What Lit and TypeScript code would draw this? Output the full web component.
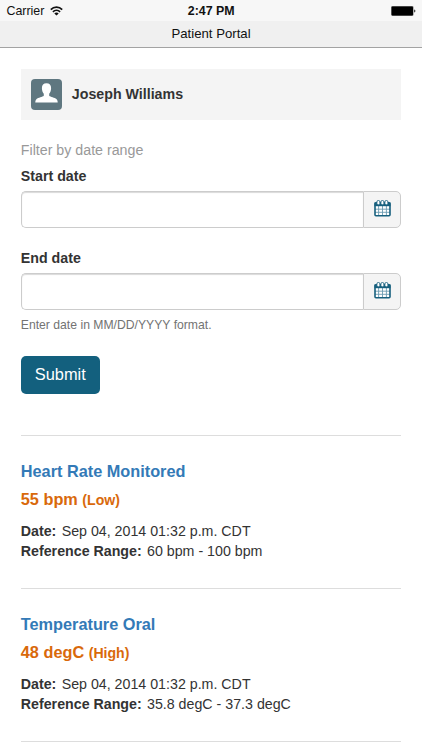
import { LitElement, html, svg, css } from "lit";
import { customElement, property } from "lit/decorators.js";

const font = css`"Liberation Sans", Arial, Helvetica, sans-serif`;

@customElement("status-bar")
class StatusBar extends LitElement {
  static styles = css`
    :host {
      display: grid;
      grid-template-columns: 1fr auto 1fr;
      align-items: center;
      height: 20.5px;
      padding: 1px 6px 0 6.5px;
      box-sizing: border-box;
      background: #f7f7f7;
      font: 12.4px/20px ${font};
      color: #111;
    }
    .carrier { display: flex; align-items: center; gap: 5.5px; }
    .time { font-weight: bold; }
    .battery { justify-self: end; display: block; }
    svg { display: block; }
    .wifi { margin-top: -1px; }
  `;
  render() {
    return html`
      <span class="carrier">
        Carrier
        <svg class="wifi" width="13" height="10" viewBox="0 0 13 10" fill="none" stroke="#111" stroke-width="1.7">
          <path d="M.8 3.6C4 .3 9 .3 12.2 3.6" />
          <path d="M2.9 5.8c2.1-2 5.1-2 7.2 0" />
          <path d="M6.5 9.5L4.3 7.4c1.2-1.1 3.200-1.100 4.400 0z" fill="#111" stroke="none" />
        </svg>
      </span>
      <span class="time">2:47 PM</span>
      <svg class="battery" width="25" height="10" viewBox="0 0 25 10">
        <rect x="0" y="0" width="22.6" height="10" rx="1.4" fill="#888" />
        <rect x=".6" y=".6" width="21.4" height="8.8" rx="1" fill="#000" />
        <path d="M23.2 3.4c1.6.3 1.6 2.9 0 3.2z" fill="#222" />
      </svg>
    `;
  }
}

@customElement("date-field")
class DateField extends LitElement {
  @property() label = "";
  static styles = css`
    :host { display: block; font: 14.23px/20.4px ${font}; color: #333; }
    .label { display: block; font-weight: bold; height: 25px; }
    .group { display: flex; height: 37px; }
    .input {
      flex: 1;
      min-width: 0;
      box-sizing: border-box;
      margin: 0;
      padding: 0 12px;
      font: inherit;
      border: 1px solid #ccc;
      border-right: 0;
      border-radius: 5px 0 0 5px;
      background: #fff;
      box-shadow: inset 0 1px 1px rgba(0, 0, 0, 0.15);
    }
    .addon {
      width: 38px;
      box-sizing: border-box;
      padding: 0;
      border: 1px solid #ccc;
      border-radius: 0 5px 5px 0;
      background: #f4f4f4;
      display: grid;
      place-items: center;
    }
    svg { display: block; margin: -2px 0 0 0; }
  `;
  render() {
    return html`
      <label class="label">${this.label}</label>
      <div class="group">
        <input class="input" type="text" />
        <button class="addon">
          <svg width="17" height="17" viewBox="0 0 17 17">
            <rect x=".8" y="2.500" width="15.4" height="13.7" rx="1" fill="#fff" />
            <path d="M4.6 6v9.6M8.5 6v9.6M12.4 6v9.6M1 9.2h15M1 12.3h15" stroke="#6b9bb1" stroke-width=".9" />
            <rect x="1" y="2.8" width="15" height="13" rx="1" fill="none" stroke="#17607e" stroke-width="1.6" />
            <path d="M.5 2.500h16v3.700H.5z" fill="#17607e" />
            ${[2.9, 6.9, 10.9].map(
              (x) => svg`<rect x=${x} y=".5" width="3" height="4.3" rx="1.400" fill="#fff" stroke="#17607e" stroke-width=".9" />`
            )}
          </svg>
        </button>
      </div>
    `;
  }
}

@customElement("result-item")
class ResultItem extends LitElement {
  @property() name = "";
  @property() value = "";
  @property() flag = "";
  @property() date = "";
  @property() range = "";
  static styles = css`
    :host {
      display: block;
      box-sizing: border-box;
      height: 153px;
      border-top: 1px solid #ddd;
      padding-top: 25px;
      font: 14.23px/20.4px ${font};
      color: #333;
    }
    .name, .value { margin: 0; font-size: 16.3px; line-height: 20px; font-weight: bold; }
    .name { color: #337ab7; }
    .value { color: #d9690b; margin-top: 8.4px; }
    .flag { font-size: 14.1px; }
    .details { margin: 10.6px 0 0; }
    .row { display: flex; gap: 5.3px; }
    .term { font-weight: bold; }
    .desc { margin: 0; }
  `;
  render() {
    return html`
      <h2 class="name">${this.name}</h2>
      <p class="value">${this.value} <span class="flag">(${this.flag})</span></p>
      <dl class="details">
        <div class="row"><dt class="term">Date:</dt><dd class="desc">${this.date}</dd></div>
        <div class="row"><dt class="term">Reference Range:</dt><dd class="desc">${this.range}</dd></div>
      </dl>
    `;
  }
}

@customElement("app-root")
class AppRoot extends LitElement {
  static styles = css`
    :host {
      display: block;
      height: 750px;
      overflow: hidden;
      background: #fff;
      font: 14.23px/20.4px ${font};
      color: #333;
    }
    .title {
      box-sizing: border-box;
      height: 27.5px;
      margin: 0;
      background: #f0f0f0;
      border-bottom: 1px solid #a3a3a3;
      font-size: 13.2px;
      font-weight: normal;
      line-height: 26px;
      text-align: center;
      color: #111;
    }
    .content { padding: 20.5px 20.8px 0; }
    .patient {
      display: flex;
      align-items: center;
      gap: 10px;
      height: 51px;
      padding-left: 10px;
      background: #f4f4f4;
      font-weight: bold;
    }
    .avatar { display: block; }
    .legend { color: #999; margin: 20.5px 0 5.1px; }
    .end { margin-top: 20.5px; }
    .hint { margin: 5px 0 0; font-size: 12.2px; color: #737373; }
    .submit {
      display: block;
      box-sizing: border-box;
      width: 79px;
      height: 38px;
      margin: 20.4px 0 41.2px;
      padding: 0 0 2px;
      border: 0;
      border-radius: 5px;
      background: #13607e;
      color: #fff;
      font: 16.4px/36px ${font};
    }
    .end-rule { margin: 0; border: 0; border-top: 1px solid #ddd; }
  `;
  render() {
    return html`
      <status-bar></status-bar>
      <h1 class="title">Patient Portal</h1>
      <main class="content">
        <div class="patient">
          <svg class="avatar" width="31" height="31" viewBox="0 0 31 31">
            <rect width="31" height="31" rx="4" fill="#5f7780" />
            <path
              d="M15.5 4.2c3 0 4.6 1.9 4.6 4.9 0 2.7-.9 4.5-1.9 5.700v2c1.200 1.300 5.600 1.800 7.200 3.200.9.800 1.300 1.900 1.300 3.500H4.300c0-1.600.4-2.700 1.300-3.500 1.600-1.400 6-1.900 7.200-3.200v-2c-1-1.200-1.900-3-1.900-5.700 0-3 1.600-4.900 4.600-4.900z"
              fill="#fff"
            />
          </svg>
          <span>Joseph Williams</span>
        </div>
        <p class="legend">Filter by date range</p>
        <date-field label="Start date"></date-field>
        <date-field class="end" label="End date"></date-field>
        <p class="hint">Enter date in MM/DD/YYYY format.</p>
        <button class="submit">Submit</button>
        <result-item
          name="Heart Rate Monitored"
          value="55 bpm"
          flag="Low"
          date="Sep 04, 2014 01:32 p.m. CDT"
          range="60 bpm - 100 bpm"
        ></result-item>
        <result-item
          name="Temperature Oral"
          value="48 degC"
          flag="High"
          date="Sep 04, 2014 01:32 p.m. CDT"
          range="35.8 degC - 37.3 degC"
        ></result-item>
        <hr class="end-rule" />
      </main>
    `;
  }
}
